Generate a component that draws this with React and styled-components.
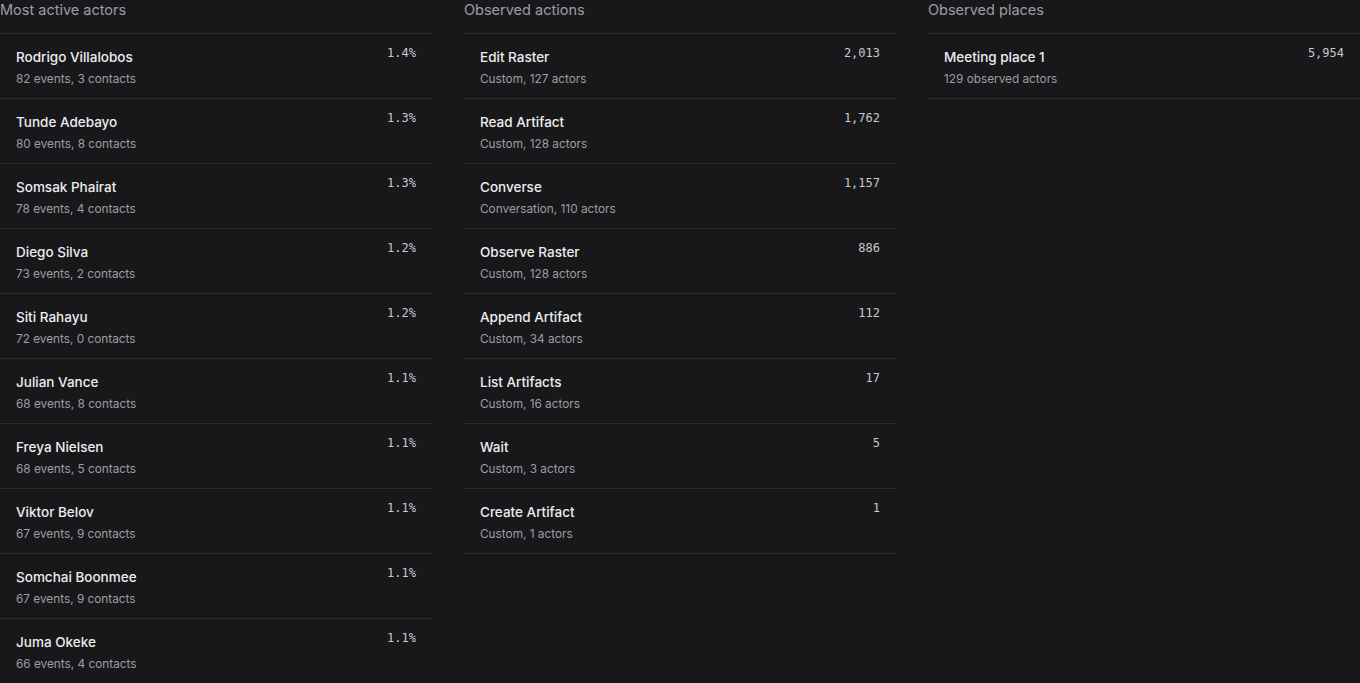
import styled, { createGlobalStyle } from 'styled-components';

const GlobalStyle = createGlobalStyle`
  html, body {
    margin: 0;
    padding: 0;
    background: #18181b;
    font-family: "Inter", "Liberation Sans", sans-serif;
    color: #e4e4e7;
    overflow: hidden;
  }
`;

const Page = styled.div`
  display: grid;
  grid-template-columns: repeat(3, 1fr);
  column-gap: 32px;
  width: 1360px;
  min-height: 683px;
  background: #18181b;
`;

const Column = styled.section`
  display: flex;
  flex-direction: column;
`;

const Heading = styled.h2`
  margin: 0;
  height: 33px;
  font-size: 14.5px;
  font-weight: 400;
  line-height: 20px;
  color: #9d9da5;
  box-sizing: border-box;
`;

const List = styled.ul`
  list-style: none;
  margin: 0;
  padding: 0;
`;

const Row = styled.li`
  display: flex;
  justify-content: space-between;
  align-items: flex-start;
  padding: 13px 16px 11px;
  border-top: 1px solid #2b2b30;
  &:last-child {
    border-bottom: 1px solid #2b2b30;
  }
`;

const Info = styled.div`
  display: flex;
  flex-direction: column;
  gap: 4px;
`;

const Title = styled.div`
  font-size: 13.5px;
  font-weight: 500;
  line-height: 20px;
  color: #ececef;
`;

const Sub = styled.div`
  font-size: 11.8px;
  line-height: 16px;
  color: #9d9da5;
`;

const Value = styled.div`
  margin-top: -1px;
  font-family: "DejaVu Sans Mono", "Liberation Mono", monospace;
  font-size: 12px;
  line-height: 14px;
  color: #c8c8cd;
`;

const actors = [
  ['Rodrigo Villalobos', '82 events, 3 contacts', '1.4%'],
  ['Tunde Adebayo', '80 events, 8 contacts', '1.3%'],
  ['Somsak Phairat', '78 events, 4 contacts', '1.3%'],
  ['Diego Silva', '73 events, 2 contacts', '1.2%'],
  ['Siti Rahayu', '72 events, 0 contacts', '1.2%'],
  ['Julian Vance', '68 events, 8 contacts', '1.1%'],
  ['Freya Nielsen', '68 events, 5 contacts', '1.1%'],
  ['Viktor Belov', '67 events, 9 contacts', '1.1%'],
  ['Somchai Boonmee', '67 events, 9 contacts', '1.1%'],
  ['Juma Okeke', '66 events, 4 contacts', '1.1%'],
];

const actions = [
  ['Edit Raster', 'Custom, 127 actors', '2,013'],
  ['Read Artifact', 'Custom, 128 actors', '1,762'],
  ['Converse', 'Conversation, 110 actors', '1,157'],
  ['Observe Raster', 'Custom, 128 actors', '886'],
  ['Append Artifact', 'Custom, 34 actors', '112'],
  ['List Artifacts', 'Custom, 16 actors', '17'],
  ['Wait', 'Custom, 3 actors', '5'],
  ['Create Artifact', 'Custom, 1 actors', '1'],
];

const places = [
  ['Meeting place 1', '129 observed actors', '5,954'],
];

function Panel({ title, items }) {
  return (
    <Column>
      <Heading>{title}</Heading>
      <List>
        {items.map(([name, sub, value]) => (
          <Row key={name}>
            <Info>
              <Title>{name}</Title>
              <Sub>{sub}</Sub>
            </Info>
            <Value>{value}</Value>
          </Row>
        ))}
      </List>
    </Column>
  );
}

export default function App() {
  return (
    <>
      <GlobalStyle />
      <Page>
        <Panel title="Most active actors" items={actors} />
        <Panel title="Observed actions" items={actions} />
        <Panel title="Observed places" items={places} />
      </Page>
    </>
  );
}
